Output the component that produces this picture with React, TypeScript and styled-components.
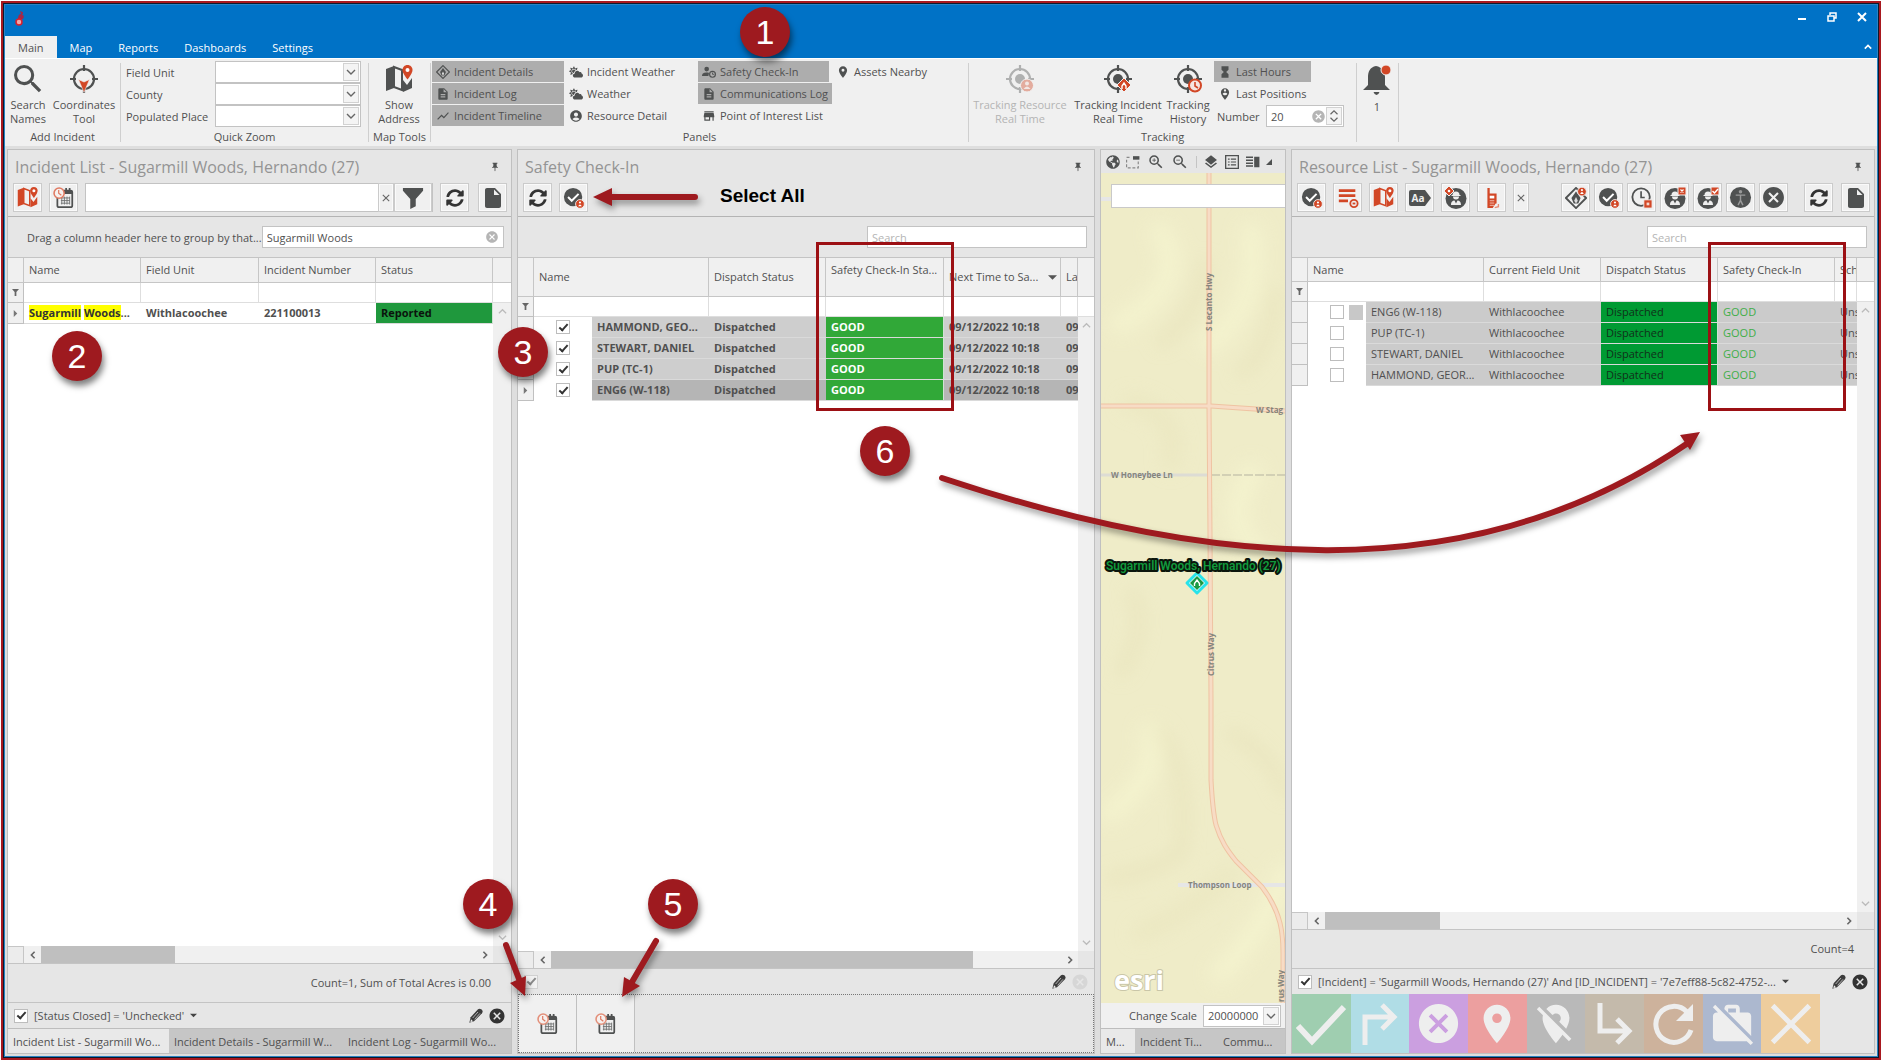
import React from "react";
import styled, { createGlobalStyle, css } from "styled-components";
import {
  MdSearch, MdDescription, MdShowChart, MdStore, MdPersonPinCircle, MdZoomIn, MdZoomOut,
  MdLayers, MdHourglassFull, MdCancel, MdInsertDriveFile, MdLocationOn,
  MdLocationOff, MdWorkOff, MdPushPin, MdAccountCircle,
} from "react-icons/md";
import { FaSyncAlt, FaCloudSun, FaGlobeAmericas } from "react-icons/fa";

const ink = "#4f5151";
const red = "#d24726";
const mark = "#9e1a1f";

const Global = createGlobalStyle`
  *, *::before, *::after { box-sizing: border-box; }
  body { margin: 0; background: #fff; }
  body, button, input, select { font-family: "Open Sans", "Noto Sans", sans-serif; font-size: 11px; color: #505050; }
  button { padding: 0; border: 0; background: none; }
  svg { display: block; flex: none; }
`;

/* ---------- window frame ---------- */
const Page = styled.div`
  position: relative;
  height: 100vh;
  padding: 1px;
  display: flex;
  overflow: hidden;
`;
const Frame = styled.div`
  flex: 1;
  min-width: 0;
  display: flex;
  border: 2px solid #a8181f;
`;
const InnerFrame = styled.div`
  flex: 1;
  min-width: 0;
  display: flex;
  flex-direction: column;
  border: 1px solid #0a1a2e;
  outline: 1px solid #2a83c4;
  outline-offset: -2px;
  padding: 1px;
  background: #dedede;
`;
const TitleBar = styled.header`
  height: 31px;
  background: #0072c6;
  display: flex;
  justify-content: space-between;
  align-items: flex-start;
  padding: 5px 8px 0 8px;
`;
const WindowButtons = styled.div`
  display: flex;
  gap: 16px;
  button { width: 14px; height: 14px; display: grid; place-items: center; }
`;
const MenuRow = styled.nav`
  height: 22px;
  background: #0072c6;
  display: flex;
  align-items: stretch;
  button:last-child { margin-left: auto; padding: 0 5px; }
`;
const MenuTab = styled.button<{ $active?: boolean }>`
  padding: 0 13px;
  color: ${(p) => (p.$active ? "#505050" : "#fff")};
  background: ${(p) => (p.$active ? "#f0f0f0" : "transparent")};
`;

/* ---------- ribbon ---------- */
const Ribbon = styled.section`
  height: 88px;
  background: #f0f0f0;
  border-top: 1px solid #fff;
  padding-top: 2px;
  display: flex;
`;
const Divider = styled.div`
  width: 1px;
  margin: 2px 0 4px;
  background: #cfcfcf;
`;
const MapDivider = styled.div`
  width: 1px;
  height: 12px;
  background: #c4c4c4;
`;
const Group = styled.div<{ $w: number }>`
  width: ${(p) => p.$w}px;
  display: flex;
  flex-direction: column;
`;
const GroupBody = styled.div<{ $pad?: number }>`
  height: 67px;
  display: flex;
  padding-left: ${(p) => p.$pad ?? 0}px;
`;
const GroupLabel = styled.div`
  text-align: center;
  line-height: 18px;
`;
const BigButton = styled.button<{ $w: number }>`
  width: ${(p) => p.$w}px;
  display: flex;
  flex-direction: column;
  align-items: center;
  gap: 5px;
  padding-top: 4px;
  line-height: 14px;
  white-space: pre;
  text-align: center;
  &:disabled { color: #b4b4b4; }
  &:disabled svg { opacity: 0.4; }
`;
const ZoomForm = styled.div`
  display: grid;
  grid-template-columns: 89px 146px;
  grid-auto-rows: 22px;
  align-items: center;
`;
const Box = styled.div<{ $w?: number; $h?: number }>`
  ${(p) => (p.$w ? css`width: ${p.$w}px;` : css`flex: 1; min-width: 0;`)}
  height: ${(p) => p.$h ?? 22}px;
  background: #fff;
  border: 1px solid #c3c3c3;
  display: flex;
  align-items: center;
`;
const Arrow = styled.span`
  width: 16px;
  height: 18px;
  margin-right: 1px;
  background: #f4f4f4;
  border: 1px solid #d2d2d2;
  display: grid;
  place-items: center;
  pointer-events: none;
`;
const Select = styled.select`
  flex: 1;
  min-width: 0;
  height: 100%;
  border: 0;
  background: none;
  appearance: none;
  padding: 0 4px;
  outline: 0;
`;
const Field = styled.input`
  flex: 1;
  min-width: 0;
  height: 100%;
  border: 0;
  background: none;
  padding: 0 4px;
  outline: 0;
  &::placeholder { color: #b5b5b5; opacity: 1; }
`;
const ClearMark = styled.span`
  padding-right: 4px;
`;
const ToggleGrid = styled.div`
  display: grid;
  grid-template-columns: 133px 133px 134px auto;
  grid-template-rows: repeat(3, 21px);
  grid-auto-flow: column;
  gap: 1px 0;
`;
const Toggle = styled.button<{ $on?: boolean; $w?: number }>`
  width: ${(p) => (p.$w ? p.$w + "px" : "auto")};
  height: 21px;
  display: flex;
  align-items: center;
  gap: 4px;
  padding: 0 4px;
  white-space: nowrap;
  background: ${(p) => (p.$on ? "#adadad" : "transparent")};
`;
const TrackOptions = styled.div`
  margin-left: 5px;
  display: flex;
  flex-direction: column;
  gap: 1px;
`;
const NumberRow = styled.div`
  display: flex;
  align-items: center;
  justify-content: space-between;
  width: 130px;
  padding-left: 3px;
`;

/* ---------- docked panels ---------- */
const Dock = styled.main`
  flex: 1;
  min-height: 0;
  padding: 3px 2px 2px;
  display: grid;
  grid-template-columns: minmax(0, 505fr) minmax(0, 578fr) minmax(0, 186fr) minmax(0, 584fr);
  gap: 5px;
`;
const Panel = styled.section`
  min-height: 0;
  display: flex;
  flex-direction: column;
  background: #e6e6e6;
  border: 1px solid #c0c0c0;
`;
const PanelTitle = styled.h2`
  margin: 0;
  height: 33px;
  padding: 0 11px 0 7px;
  display: flex;
  align-items: center;
  justify-content: space-between;
  font-size: 16px;
  font-weight: 400;
  color: #949494;
  white-space: nowrap;
`;
const Toolbar = styled.div<{ $gap?: number }>`
  height: 34px;
  padding: 0 4px 4px 5px;
  display: flex;
  gap: ${(p) => p.$gap ?? 7}px;
  border-bottom: 1px solid #b4b4b4;
`;
const ToolSet = styled.div<{ $gap: number; $push?: boolean }>`
  display: flex;
  gap: ${(p) => p.$gap}px;
  margin-left: ${(p) => (p.$push ? "auto" : 0)};
`;
const Tool = styled.button<{ $w?: number }>`
  width: ${(p) => p.$w ?? 29}px;
  height: 29px;
  flex: none;
  display: grid;
  place-items: center;
  background: #f0f0f0;
  border: 1px solid #cbcbcb;
  box-shadow: inset 0 0 0 1px #fafafa;
`;
const GroupBar = styled.div`
  height: 41px;
  padding: 0 7px 0 19px;
  display: flex;
  align-items: center;
  justify-content: space-between;
  border-bottom: 1px solid #c4c4c4;
`;
const Small = styled.span`
  font-size: 11px;
  white-space: nowrap;
`;
const GridArea = styled.div`
  flex: 1;
  min-height: 0;
  display: flex;
  background: #fff;
`;
const TableSide = styled.div`
  flex: 1;
  min-width: 0;
  overflow: hidden;
`;
const Table = styled.table`
  width: 100%;
  table-layout: fixed;
  border-collapse: separate;
  border-spacing: 0;
  th, td {
    padding: 0 3px 0 5px;
    overflow: hidden;
    white-space: nowrap;
    text-align: left;
    line-height: 16px;
  }
`;
const Head = styled.tr<{ $h: number }>`
  height: ${(p) => p.$h}px;
  th {
    font-weight: 400;
    background: #f0f0f0;
    border-right: 1px solid #c6c6c6;
    border-bottom: 1px solid #c6c6c6;
  }
  th.top { vertical-align: top; padding-top: 4px; }
`;
const Sorted = styled.span`
  display: flex;
  align-items: center;
  justify-content: space-between;
`;
const FilterRow = styled.tr`
  height: 20px;
  td { border-right: 1px solid #dedede; border-bottom: 1px solid #dedede; }
`;
const Row = styled.tr<{ $bold?: boolean; $bg?: string }>`
  height: 21px;
  font-weight: ${(p) => (p.$bold ? 700 : 400)};
  td {
    border-bottom: 1px solid #dadada;
    background: ${(p) => p.$bg ?? "#fff"};
  }
  td.check { background: #fff; border-color: #fff; }
`;
const Indicator = styled.td`
  &&& {
    background: #f0f0f0;
    border-right: 1px solid #c0c0c0;
    border-bottom: 1px solid #c0c0c0;
    padding: 0 4px;
  }
`;
const Status = styled.td<{ $fill?: string; $ink: string }>`
  &&& {
    ${(p) => p.$fill && css`background: ${p.$fill}; border-right: 1px solid #cfe3d2;`}
    color: ${(p) => p.$ink};
  }
`;
const Hit = styled.mark`
  background: #ff0;
  color: #333;
`;
const CheckCell = styled.div`
  display: flex;
  gap: 5px;
  padding-left: 17px;
`;
const Swatch = styled.i`
  width: 15px;
  height: 15px;
  background: #c8c8c8;
`;
const Check = styled.input.attrs({ type: "checkbox" })<{ $faint?: boolean }>`
  appearance: none;
  flex: none;
  width: 14px;
  height: 14px;
  margin: 0;
  background: #fff;
  border: 1px solid #bdbdbd;
  display: grid;
  place-items: center;
  opacity: ${(p) => (p.$faint ? 0.5 : 1)};
  &:checked::after {
    content: "";
    width: 5px;
    height: 9px;
    margin-top: -2px;
    border: solid #333;
    border-width: 0 2px 2px 0;
    transform: rotate(42deg);
  }
`;
const RailSide = styled.div<{ $w: number }>`
  width: ${(p) => p.$w}px;
  display: flex;
  flex-direction: column;
`;
const RailHead = styled.div<{ $h: number }>`
  height: ${(p) => p.$h}px;
  background: #f0f0f0;
  border-bottom: 1px solid #c6c6c6;
`;
const RailFilter = styled.div`
  height: 20px;
  border-bottom: 1px solid #dedede;
`;
const Rail = styled.div`
  flex: 1;
  background: #f0f0f0;
  display: flex;
  flex-direction: column;
  justify-content: space-between;
  align-items: center;
  padding: 4px 0;
`;
const HBar = styled.div`
  height: 17px;
  display: flex;
  background: #f0f0f0;
`;
const HCorner = styled.div`
  width: 16px;
  background: #ececec;
  border: solid #c6c6c6;
  border-width: 1px 1px 0 0;
`;
const HArrow = styled.div`
  width: 17px;
  display: grid;
  place-items: center;
`;
const HTrack = styled.div`
  flex: 1;
`;
const HThumb = styled.div<{ $w: number }>`
  width: ${(p) => p.$w}px;
  height: 17px;
  background: #bfbfbf;
`;
const HEnd = styled.div<{ $w: number }>`
  width: ${(p) => p.$w}px;
  background: #e6e6e6;
`;
const Summary = styled.div`
  height: 39px;
  padding: 0 20px 2px 0;
  border-top: 1px solid #c4c4c4;
  display: flex;
  align-items: center;
  justify-content: flex-end;
`;
const FilterBar = styled.div`
  height: 26px;
  padding: 0 5px 0 6px;
  border-top: 1px solid #c4c4c4;
  display: flex;
  align-items: center;
  gap: 4px;
  label { display: flex; align-items: center; gap: 6px; white-space: nowrap; }
  & > button:first-of-type { margin-left: auto; }
`;
const Tabs = styled.div`
  height: 25px;
  display: flex;
  background: #c6c6c6;
  border-top: 1px solid #bdbdbd;
`;
const Tab = styled.button<{ $active?: boolean; $w: number }>`
  width: ${(p) => p.$w}px;
  padding-left: 5px;
  text-align: left;
  white-space: nowrap;
  background: ${(p) => (p.$active ? "#e9e9e9" : "transparent")};
`;
const ActionStrip = styled.div`
  height: 59px;
  display: flex;
  border: 1px dotted #777;
`;
const ActionTile = styled.button`
  width: 58px;
  display: grid;
  place-items: center;
  background: #f0f0f0;
  border-right: 1px solid #c0c0c0;
`;
const TileStrip = styled.div`
  height: 59px;
  width: 528px;
  max-width: 100%;
  display: grid;
  grid-template-columns: repeat(9, 1fr);
`;
const Tile = styled.button<{ $bg: string }>`
  background: ${(p) => p.$bg};
  display: grid;
  place-items: center;
  color: #eee;
`;

/* ---------- map ---------- */
const MapTools = styled.div`
  height: 23px;
  display: flex;
  align-items: center;
  justify-content: space-between;
  padding: 0 13px 0 5px;
`;
const MapView = styled.div`
  flex: 1;
  min-height: 0;
  position: relative;
  overflow: hidden;
  & > svg { width: 100%; height: 100%; }
`;
const MapSearch = styled.input`
  position: absolute;
  top: 11px;
  left: 10px;
  right: 0;
  width: calc(100% - 10px);
  height: 24px;
  background: #fff;
  border: 1px solid #c9c9c9;
  border-right: 0;
`;
const ScaleRow = styled.div`
  height: 25px;
  padding: 0 4px;
  background: #f0f0f0;
  display: flex;
  align-items: center;
  justify-content: flex-end;
  gap: 6px;
`;

/* ---------- callouts over the window ---------- */
const Callouts = styled.div`
  position: absolute;
  inset: 0;
  pointer-events: none;
`;
const Lines = styled.svg`
  position: absolute;
  inset: 0;
  overflow: visible;
  filter: drop-shadow(2px 4px 3px rgba(0, 0, 0, 0.4));
`;
const Badge = styled.div<{ $x: number; $y: number }>`
  position: absolute;
  left: ${(p) => p.$x - 25}px;
  top: ${(p) => p.$y - 25}px;
  width: 50px;
  height: 50px;
  border-radius: 50%;
  background: ${mark};
  color: #fff;
  font: 34px/50px "Liberation Sans", Arial, sans-serif;
  text-align: center;
  box-shadow: 2px 5px 6px rgba(0, 0, 0, 0.5);
`;
const Outline = styled.div<{ $x: number }>`
  position: absolute;
  left: ${(p) => p.$x}px;
  top: 242px;
  width: 138px;
  height: 169px;
  border: 3px solid #9c1014;
`;
const Note = styled.div`
  position: absolute;
  left: 720px;
  top: 184px;
  font: bold 19px/24px "Liberation Sans", Arial, sans-serif;
  color: #000;
`;

/* ---------- icons ---------- */
const Svg = ({ s = 20, v = 24, children }: { s?: number; v?: number; children: React.ReactNode }) => (
  <svg width={s} height={s} viewBox={`0 0 ${v} ${v}`} fill="none" aria-hidden="true">{children}</svg>
);
const Chevron = ({ dir = "down", c = "#666", s = 10, w = 1.4 }: { dir?: string; c?: string; s?: number; w?: number }) => {
  const d: Record<string, string> = { down: "M1 3l4 4 4-4", up: "M1 7l4-4 4 4", left: "M7 1L3 5l4 4", right: "M3 1l4 4-4 4" };
  return <Svg s={s} v={10}><path d={d[dir]} stroke={c} strokeWidth={w} /></Svg>;
};
const MapIcon = ({ s = 28, c = ink }: { s?: number; c?: string }) => (
  <Svg s={s} v={28}>
    <path d="M1 4l8-3v22l-8 3z" fill={c} />
    <path d="M9 2l8 3v20l-8-3z" stroke={c} strokeWidth="2" />
    <path d="M18 15l4 5 5-7v10l-9 4z" fill={c} />
    <path d="M22.500 0c-3 0-5 2.200-5 5 0 3.500 5 9.500 5 9.500s5-6 5-9.500c0-2.800-2-5-5-5z" fill={red} />
    <circle cx="22.500" cy="5" r="2" fill="#fff" />
  </Svg>
);
const CalendarIcon = ({ s = 21, faded = false }: { s?: number; faded?: boolean }) => (
  <Svg s={s}>
    <path d="M5 8v13a2 2 0 002 2h13a2 2 0 002-2V6a2 2 0 00-2-2h-8" stroke={ink} strokeWidth="2" />
    <path d="M12 3.500h10V8H12z" fill={ink} />
    <path d="M15 1v4M19 1v4" stroke={ink} strokeWidth="2" />
    <path d="M9 12.500h10M9 15.500h10M9 18.500h10M10 11v9M13 11v9M16 11v9M19 11v9" stroke="#6d6f6f" strokeWidth="1" />
    <circle cx="7" cy="7" r="5.800" fill="#f6f0ee" stroke={faded ? "#e3907a" : "#e07a62"} strokeWidth="1.800" />
    <path d="M6.500 3.500V7l3 2.500" stroke="#e07a62" strokeWidth="1.400" />
  </Svg>
);
const InfoBadge = ({ x = 18.5, y = 18.5 }: { x?: number; y?: number }) => (
  <>
    <circle cx={x} cy={y} r="4.800" fill={red} stroke="#f0f0f0" />
    <circle cx={x} cy={y - 1.6} r="1.200" fill="#fff" />
    <path d={`M${x - 2} ${y + 2.5}q2-4 4 0z`} fill="#fff" />
  </>
);
const CheckBadge = ({ s = 22 }: { s?: number }) => (
  <Svg s={s}>
    <circle cx="11" cy="11" r="10" fill={ink} />
    <path d="M5.500 11l4 4 7.500-7.500" stroke="#fff" strokeWidth="2.200" />
    <InfoBadge />
  </Svg>
);
const ListBadge = () => (
  <Svg s={22}>
    <path d="M2 4h18M2 9.500h18M2 15h10" stroke={red} strokeWidth="3" />
    <circle cx="18.500" cy="18" r="4" stroke={red} strokeWidth="2" fill="#f0f0f0" />
    <path d="M17 17h3v2h-3z" fill={red} />
  </Svg>
);
const TagIcon = () => (
  <Svg s={24}>
    <path d="M3 4h14l6 8-6 8H3a2 2 0 01-2-2V6a2 2 0 012-2z" fill={ink} />
    <text x="3.500" y="16" fontSize="10" fontWeight="700" fill="#eee" fontFamily="Open Sans, sans-serif">Aa</text>
  </Svg>
);
const PersonDisc = ({ badge }: { badge?: "x" | "check" | "fire" }) => (
  <Svg s={24}>
    <circle cx="12" cy="12.500" r="10.500" fill={ink} />
    <path d="M8.500 9a3.500 3.500 0 017 0h1v1h-9V9zM9 10.500h6a3 3 0 01-6 0zM7 19c0-3.500 2-4.500 3.500-4.500l1.500 3 1.500-3c1.500 0 3.500 1 3.500 4.500z" fill="#eee" />
    {badge === "fire" && <><path d="M5 0l5 5-5 5-5-5z" fill={red} stroke="#f0f0f0" /><circle cx="5" cy="5" r="1.300" fill="#fff" /></>}
    {badge && badge !== "fire" && <path d="M15 1h8v8h-8z" fill={red} stroke="#f0f0f0" />}
    {badge === "x" && <path d="M17.500 3.500l3 3M20.500 3.500l-3 3" stroke="#fff" strokeWidth="1.200" />}
    {badge === "check" && <path d="M16.500 5l2 2 3.500-4" stroke="#fff" strokeWidth="1.400" />}
  </Svg>
);
const RadioIcon = () => (
  <Svg s={22}>
    <path d="M7 1h2.500v6H17v16H7z" fill={red} />
    <path d="M9.500 9.500h5v3h-5z" fill="#fff" />
    <path d="M9.500 15h5M9.500 17.500h5M9.500 20h5" stroke="#f3c4b8" strokeWidth="1" />
    <path d="M12 24h9v-6h-5" fill="#f0f0f0" />
    <path d="M15 22.500l4-1v-3" stroke="#e78a74" strokeWidth="1.500" />
  </Svg>
);
const FireDiamond = ({ s = 22, c = ink, badge = false }: { s?: number; c?: string; badge?: boolean }) => (
  <Svg s={s}>
    <path d="M12 1l11 11-11 11L1 12z" stroke={c} strokeWidth="2" />
    <path d="M12 5l5 7-2.500 6h-5L7 12z" fill={c} />
    <path d="M12 11l2 4-2 3-2-3z" fill="#ddd" />
    {badge && <InfoBadge x={18.5} y={5} />}
  </Svg>
);
const ClockBadge = () => (
  <Svg s={22}>
    <circle cx="11" cy="11" r="9.500" stroke={ink} strokeWidth="2" />
    <path d="M11 4.500v7h4" stroke={ink} strokeWidth="1.800" />
    <path d="M14 14h9v9h-9z" fill={red} stroke="#f0f0f0" />
    <path d="M17 17h3v3h-3z" fill="#f6d6cd" />
  </Svg>
);
const FigureDisc = () => (
  <Svg s={23}>
    <circle cx="12" cy="12" r="11" fill={ink} />
    <circle cx="12" cy="6" r="1.800" fill="#999" />
    <path d="M7 9.500h10M12 9v6l-2.500 5M12 15l2.500 5" stroke="#999" strokeWidth="1.500" />
  </Svg>
);
const Target = ({ kind }: { kind: "person" | "fire" | "history" | "nav" }) => (
  <Svg s={28} v={28}>
    <circle cx="14" cy="14" r="10" stroke={ink} strokeWidth="2.200" />
    <path d="M14 0v6M14 22v6M0 14h6M22 14h6" stroke={ink} strokeWidth="2.200" />
    {kind !== "nav" && <circle cx="14" cy="14" r="5" fill={ink} />}
    {kind === "nav" && <path d="M8.500 14.500L14 17l5.500-2.500L14 27.500z" fill={red} stroke="#f0f0f0" strokeWidth="0.600" />}
    {kind === "person" && <><circle cx="21" cy="20.500" r="6.500" fill={red} stroke="#f0f0f0" /><circle cx="21" cy="18.500" r="2" fill="#f7dcd4" /><path d="M17.500 24q3.500-5 7 0z" fill="#f7dcd4" /></>}
    {kind === "fire" && <><path d="M20 13l7 7-7 7-7-7z" fill={red} stroke="#f0f0f0" /><path d="M18 24v-3l2-3 2 3v3" stroke="#fff" strokeWidth="1.400" /></>}
    {kind === "history" && <><circle cx="21" cy="20.500" r="6" fill="#f6e6e1" stroke={red} strokeWidth="2" /><path d="M21 17v4l3 2" stroke={red} strokeWidth="1.600" /></>}
  </Svg>
);
const Bell = () => (
  <Svg s={30} v={30}>
    <path d="M14 1c-6 1-8 6-8 11v8l-5 5h27l-5-5v-8c0-5-3-10-9-11z" fill={ink} />
    <path d="M11.500 27h6q-1 3-3 3t-3-3z" fill={ink} />
    <circle cx="24" cy="5" r="5" fill={red} stroke="#f0f0f0" />
  </Svg>
);
const PersonClock = () => (
  <Svg s={14}>
    <circle cx="8" cy="7" r="4" fill={ink} />
    <path d="M0 19c0-5 4-6 8-6 2 0 3 0 4 1l-1 5z" fill={ink} />
    <circle cx="18" cy="16" r="5" stroke={ink} strokeWidth="2" />
    <path d="M18 13v3h3" stroke={ink} strokeWidth="1.500" />
  </Svg>
);
const Funnel = ({ s = 22 }: { s?: number }) => (
  <Svg s={s}><path d="M1 1h22v3l-8 9v8l-6 3V13L1 4z" fill={ink} /></Svg>
);
const TinyFunnel = () => <Svg s={7} v={8}><path d="M0 0h8L5 3.500V8H3V3.500z" fill="#666" /></Svg>;
const RowMark = () => <Svg s={7} v={8}><path d="M2 0l4 4-4 4z" fill="#777" /></Svg>;
const Pin = () => <MdPushPin size={10} color={ink} />;
const CrossIcon = ({ s = 10, w = 1.4, c = "#666" }: { s?: number; w?: number; c?: string }) => (
  <Svg s={s} v={10}><path d="M1 1l8 8M9 1L1 9" stroke={c} strokeWidth={w} /></Svg>
);
const Pencil = () => (
  <Svg s={16}>
    <path d="M2 22l2-8L15 2q2-2 5 0l1 1q2 2 0 5L9 20z" fill="#3c3c3c" />
    <path d="M7 15l8-9M10 17l8-9" stroke="#bbb" strokeWidth="1.400" />
    <path d="M4.500 17l3 3-4 1.200z" fill="#eee" />
  </Svg>
);

/* ---------- pieces ---------- */
const Combo = ({ id, value = "", w, h }: { id: string; value?: string; w?: number; h?: number }) => (
  <Box $w={w} $h={h}>
    <Select id={id} defaultValue={value}><option>{value}</option></Select>
    <Arrow><Chevron /></Arrow>
  </Box>
);

const HScroll = ({ thumb, end }: { thumb: number; end: number }) => (
  <HBar>
    <HCorner />
    <HArrow><Chevron dir="left" w={2} s={8} /></HArrow>
    <HTrack><HThumb $w={thumb} /></HTrack>
    <HArrow><Chevron dir="right" w={2} s={8} /></HArrow>
    <HEnd $w={end} />
  </HBar>
);

const ScrollRail = ({ w, h }: { w: number; h: number }) => (
  <RailSide $w={w}>
    <RailHead $h={h} />
    <RailFilter />
    <Rail><Chevron dir="up" c="#bbb" s={9} /><Chevron dir="down" c="#bbb" s={9} /></Rail>
  </RailSide>
);

const Cols = ({ widths }: { widths: number[] }) => (
  <colgroup>{widths.map((w, i) => <col key={i} width={w} />)}<col /></colgroup>
);

const BlankFilter = ({ spans }: { spans: number[] }) => (
  <FilterRow>
    <Indicator><TinyFunnel /></Indicator>
    {spans.map((n, i) => <td key={i} colSpan={n} />)}
  </FilterRow>
);

const BarFilter = ({ text, off }: { text?: string; off?: boolean }) => (
  <FilterBar>
    <label>
      <Check defaultChecked $faint={off} aria-label={text ? undefined : "Filter"} />
      {text}
      {text && <Svg s={7} v={8}><path d="M0 2h8L4 6z" fill="#444" /></Svg>}
    </label>
    <button aria-label="Edit filter"><Pencil /></button>
    <button aria-label="Clear filter"><MdCancel size={18} color={off ? "#d6d6d6" : "#333"} /></button>
  </FilterBar>
);

const checkIns = ["HAMMOND, GEO...", "STEWART, DANIEL", "PUP (TC-1)", "ENG6 (W-118)"];
const resources = ["ENG6 (W-118)", "PUP (TC-1)", "STEWART, DANIEL", "HAMMOND, GEOR..."];

const RibbonBar = () => (
  <Ribbon>
    <Group $w={115}>
      <GroupBody>
        <BigButton $w={46}><MdSearch size={28} color={ink} viewBox="3 3 18 18" />{"Search\nNames"}</BigButton>
        <BigButton $w={66}><Target kind="nav" />{"Coordinates\nTool"}</BigButton>
      </GroupBody>
      <GroupLabel>Add Incident</GroupLabel>
    </Group>
    <Divider />
    <Group $w={247}>
      <GroupBody $pad={5}>
        <ZoomForm>
          <label htmlFor="unit">Field Unit</label><Combo id="unit" w={146} />
          <label htmlFor="county">County</label><Combo id="county" w={146} />
          <label htmlFor="place">Populated Place</label><Combo id="place" w={146} />
        </ZoomForm>
      </GroupBody>
      <GroupLabel>Quick Zoom</GroupLabel>
    </Group>
    <Divider />
    <Group $w={61}>
      <GroupBody><BigButton $w={60}><MapIcon />{"Show\nAddress"}</BigButton></GroupBody>
      <GroupLabel>Map Tools</GroupLabel>
    </Group>
    <Divider />
    <Group $w={537}>
      <GroupBody $pad={1}>
        <ToggleGrid>
          <Toggle $on $w={132}><FireDiamond s={14} />Incident Details</Toggle>
          <Toggle $on $w={132}><MdDescription size={14} color={ink} />Incident Log</Toggle>
          <Toggle $on $w={132}><MdShowChart size={14} color={ink} />Incident Timeline</Toggle>
          <Toggle><FaCloudSun size={14} color={ink} />Incident Weather</Toggle>
          <Toggle><FaCloudSun size={14} color={ink} />Weather</Toggle>
          <Toggle><MdAccountCircle size={14} color={ink} />Resource Detail</Toggle>
          <Toggle $on $w={131}><PersonClock />Safety Check-In</Toggle>
          <Toggle $on $w={134}><MdDescription size={14} color={ink} />Communications Log</Toggle>
          <Toggle><MdStore size={14} color={ink} />Point of Interest List</Toggle>
          <Toggle><MdLocationOn size={14} color={ink} />Assets Nearby</Toggle>
        </ToggleGrid>
      </GroupBody>
      <GroupLabel>Panels</GroupLabel>
    </Group>
    <Divider />
    <Group $w={387}>
      <GroupBody $pad={2}>
        <BigButton $w={98} disabled><Target kind="person" />{"Tracking Resource\nReal Time"}</BigButton>
        <BigButton $w={98}><Target kind="fire" />{"Tracking Incident\nReal Time"}</BigButton>
        <BigButton $w={42}><Target kind="history" />{"Tracking\nHistory"}</BigButton>
        <TrackOptions>
          <Toggle $on $w={97}><MdHourglassFull size={14} color={ink} />Last Hours</Toggle>
          <Toggle><MdPersonPinCircle size={14} color={ink} />Last Positions</Toggle>
          <NumberRow>
            <label htmlFor="hours">Number</label>
            <Box $w={78}>
              <Field id="hours" defaultValue="20" />
              <MdCancel size={15} color="#b5b5b5" />
              <Arrow><Svg s={14} v={16}><path d="M4 6l4-4 4 4M4 10l4 4 4-4" stroke="#666" strokeWidth="1.400" /></Svg></Arrow>
            </Box>
          </NumberRow>
        </TrackOptions>
      </GroupBody>
      <GroupLabel>Tracking</GroupLabel>
    </Group>
    <Divider />
    <Group $w={41}>
      <GroupBody><BigButton $w={40}><Bell />1</BigButton></GroupBody>
    </Group>
    <Divider />
  </Ribbon>
);

const IncidentList = () => (
  <Panel>
    <PanelTitle>Incident List - Sugarmill Woods, Hernando (27)<Pin /></PanelTitle>
    <Toolbar>
      <Tool aria-label="Map"><MapIcon s={21} c={red} /></Tool>
      <Tool aria-label="Schedule"><CalendarIcon /></Tool>
      <Box $h={29}>
        <Field aria-label="Filter incidents" />
        <Tool $w={16} aria-label="Clear"><CrossIcon s={8} /></Tool>
        <Tool $w={38} aria-label="Filter"><Funnel /></Tool>
      </Box>
      <ToolSet $gap={9}>
        <Tool aria-label="Refresh"><FaSyncAlt size={18} color="#333" /></Tool>
        <Tool aria-label="New"><MdInsertDriveFile size={24} color={ink} /></Tool>
      </ToolSet>
    </Toolbar>
    <GroupBar>
      <Small>Drag a column header here to group by that...</Small>
      <Box $w={244}>
        <Field defaultValue="Sugarmill Woods" aria-label="Search incidents" />
        <ClearMark><MdCancel size={14} color="#b5b5b5" /></ClearMark>
      </Box>
    </GroupBar>
    <GridArea>
      <TableSide>
        <Table>
          <Cols widths={[16, 117, 118, 117]} />
          <thead>
            <Head $h={25}><th /><th>Name</th><th>Field Unit</th><th>Incident Number</th><th>Status</th></Head>
          </thead>
          <tbody>
            <BlankFilter spans={[1, 1, 1, 1]} />
            <Row $bold>
              <Indicator><RowMark /></Indicator>
              <td><Hit>Sugarmill</Hit> <Hit>Woods</Hit>...</td>
              <td>Withlacoochee</td>
              <td>221100013</td>
              <Status $fill="#1f983d" $ink="#0a140c">Reported</Status>
            </Row>
          </tbody>
        </Table>
      </TableSide>
      <ScrollRail w={18} h={25} />
    </GridArea>
    <HScroll thumb={134} end={18} />
    <Summary>Count=1, Sum of Total Acres is 0.00</Summary>
    <BarFilter text="[Status Closed] = 'Unchecked'" />
    <Tabs>
      <Tab $w={161} $active>Incident List - Sugarmill Wo...</Tab>
      <Tab $w={174}>Incident Details - Sugarmill W...</Tab>
      <Tab $w={164}>Incident Log - Sugarmill Wo...</Tab>
    </Tabs>
  </Panel>
);

const SafetyCheckIn = () => (
  <Panel>
    <PanelTitle>Safety Check-In<Pin /></PanelTitle>
    <Toolbar>
      <Tool aria-label="Refresh"><FaSyncAlt size={18} color="#333" /></Tool>
      <Tool aria-label="Select all"><CheckBadge /></Tool>
    </Toolbar>
    <GroupBar>
      <span />
      <Box $w={220}><Field placeholder="Search" aria-label="Search check-ins" /></Box>
    </GroupBar>
    <GridArea>
      <TableSide>
        <Table>
          <Cols widths={[16, 58, 117, 117, 118, 117]} />
          <thead>
            <Head $h={39}>
              <th /><th colSpan={2}>Name</th><th>Dispatch Status</th><th className="top">Safety Check-In Sta...</th>
              <th><Sorted>Next Time to Sa...<Svg s={9} v={8}><path d="M0 2h8L4 6z" fill="#555" /></Svg></Sorted></th>
              <th>La</th>
            </Head>
          </thead>
          <tbody>
            <BlankFilter spans={[2, 1, 1, 1, 1]} />
            {checkIns.map((name, i) => (
              <Row key={name} $bold $bg={i === 3 ? "#b5b5b5" : "#cecece"}>
                <Indicator>{i === 3 && <RowMark />}</Indicator>
                <td className="check"><CheckCell><Check defaultChecked aria-label={name} /></CheckCell></td>
                <td>{name}</td>
                <td>Dispatched</td>
                <Status $fill="#31a838" $ink="#fff">GOOD</Status>
                <td>09/12/2022 10:18</td>
                <td>09</td>
              </Row>
            ))}
          </tbody>
        </Table>
      </TableSide>
      <ScrollRail w={16} h={39} />
    </GridArea>
    <HScroll thumb={422} end={16} />
    <BarFilter off />
    <ActionStrip>
      <ActionTile aria-label="Check in"><CalendarIcon faded /></ActionTile>
      <ActionTile aria-label="Check in later"><CalendarIcon faded /></ActionTile>
    </ActionStrip>
  </Panel>
);

const road = "M108 0V233L109 360 110 527V607C111 625 112 640 115 652 120 668 126 677 135 688L161 714C171 727 176 738 179 750 182 762 182 770 182 780V831";
const MapPanel = () => (
  <Panel>
    <MapTools>
      <FaGlobeAmericas size={14} color={ink} />
      <Svg s={14}><path d="M1 8v14h20V8M1 4h8" stroke="#888" strokeWidth="2" strokeDasharray="5 3" /><path d="M12 2h11v6H12z" fill={ink} /></Svg>
      <MdZoomIn size={18} color={ink} />
      <MdZoomOut size={18} color={ink} />
      <MapDivider />
      <MdLayers size={16} color={ink} />
      <Svg s={14}><path d="M1 1h22v22H1z" stroke={ink} strokeWidth="2.500" /><path d="M5 7h3M5 12h3M5 17h3M10 7h9M10 12h9M10 17h9" stroke={ink} strokeWidth="2" /></Svg>
      <Svg s={14}><path d="M0 4h12M0 9h12M0 14h12M0 19h12" stroke={ink} strokeWidth="2.500" /><path d="M14 3h9v18h-9z" fill={ink} /></Svg>
      <Svg s={6} v={8}><path d="M8 0v8H0z" fill={ink} /></Svg>
    </MapTools>
    <MapView>
      <svg viewBox="0 0 184 831" preserveAspectRatio="xMinYMin slice" fontFamily="Open Sans, Noto Sans, sans-serif">
        <defs><filter id="soft" x="-50%" y="-50%" width="200%" height="200%"><feGaussianBlur stdDeviation="9" /></filter></defs>
        <rect width="184" height="831" fill="#efecc8" />
        <g filter="url(#soft)" fill="none" strokeLinecap="round" opacity="0.6">
          <path d="M20 150Q90 110 60 60M150 60Q160 130 110 170M10 640Q60 600 50 560M150 300Q120 350 160 380M120 800Q160 760 184 700" stroke="#f7f7d2" strokeWidth="22" />
          <path d="M60 170Q100 140 104 90M30 420Q50 450 20 500M60 560Q90 600 80 680Q50 700 10 705M140 200Q170 180 175 120M130 560Q170 580 184 620" stroke="#e4dfb6" strokeWidth="10" />
          <path d="M30 230Q80 240 70 290M40 760Q90 740 130 700" stroke="#e9e5be" strokeWidth="18" />
        </g>
        <path d="M0 26h10M77 712h107" stroke="#e6e6e6" strokeWidth="4" />
        <path d="M0 302h108" stroke="#dddcd4" strokeWidth="3" />
        <path d="M110 302h74" stroke="#b5b3a0" strokeWidth="1" strokeDasharray="9 2" />
        <path d="M0 233h110l74 5" stroke="#efc3a2" strokeWidth="5" fill="none" />
        <path d={road} stroke="#efc3a2" strokeWidth="5" fill="none" />
        <path d="M0 233h110l74 5" stroke="#f7dcc5" strokeWidth="3" fill="none" />
        <path d={road} stroke="#f7dcc5" strokeWidth="3" fill="none" />
        <g fill="#85857c" fontSize="8" fontWeight="700">
          <text x="155" y="240">W Stag</text>
          <text x="10" y="305">W Honeybee Ln</text>
          <text x="87" y="715">Thompson Loop</text>
          <text transform="translate(111 158) rotate(-90)">S Lecanto Hwy</text>
          <text transform="translate(113 503) rotate(-90)">Citrus Way</text>
          <text transform="translate(183 829) rotate(-90)">rus Way</text>
        </g>
        <path d="M96 400l10 10-10 10-10-10z" fill="#fff" stroke="#27e3ea" strokeWidth="3" strokeLinejoin="round" />
        <path d="M96 403l7 7-7 7-7-7z" fill="#189a43" />
        <path d="M93.500 413v-2.500l2.500-3.500 2.500 3.500v2.500" stroke="#fff" strokeWidth="1.400" fill="none" />
        <text x="5" y="397" fontSize="12" fontWeight="600" fill="#119a3c" stroke="#0b150c" strokeWidth="4" strokeLinejoin="round" paintOrder="stroke" fontFamily="Roboto, sans-serif">Sugarmill Woods, Hernando (27)</text>
        <text x="13" y="817" fontSize="27" fontWeight="700" fill="#fff" stroke="#c9c6a8" strokeWidth="2" paintOrder="stroke">esri</text>
      </svg>
      <MapSearch aria-label="Find on map" />
    </MapView>
    <ScaleRow>
      <label htmlFor="scale">Change Scale</label>
      <Combo id="scale" value="20000000" w={78} />
    </ScaleRow>
    <Tabs>
      <Tab $w={34} $active>M...</Tab>
      <Tab $w={83}>Incident Ti...</Tab>
      <Tab $w={60}>Commu...</Tab>
    </Tabs>
  </Panel>
);

const ResourceList = () => (
  <Panel>
    <PanelTitle>Resource List - Sugarmill Woods, Hernando (27)<Pin /></PanelTitle>
    <Toolbar $gap={16}>
      <ToolSet $gap={7}>
        <Tool aria-label="Check in"><CheckBadge /></Tool>
        <Tool aria-label="Assign list"><ListBadge /></Tool>
        <Tool aria-label="Map"><MapIcon s={21} c={red} /></Tool>
        <Tool aria-label="Label"><TagIcon /></Tool>
        <Tool aria-label="Incident crew"><PersonDisc badge="fire" /></Tool>
        <Tool aria-label="Radio"><RadioIcon /></Tool>
        <Tool $w={16} aria-label="Clear"><CrossIcon s={8} /></Tool>
      </ToolSet>
      <ToolSet $gap={4} $push>
        <Tool aria-label="Incident"><FireDiamond badge /></Tool>
        <Tool aria-label="Check"><CheckBadge /></Tool>
        <Tool aria-label="Time"><ClockBadge /></Tool>
        <Tool aria-label="Release"><PersonDisc badge="x" /></Tool>
        <Tool aria-label="Confirm"><PersonDisc badge="check" /></Tool>
        <Tool aria-label="Crew"><FigureDisc /></Tool>
        <Tool aria-label="Cancel"><MdCancel size={25} color={ink} /></Tool>
      </ToolSet>
      <ToolSet $gap={8}>
        <Tool aria-label="Refresh"><FaSyncAlt size={18} color="#333" /></Tool>
        <Tool aria-label="New"><MdInsertDriveFile size={24} color={ink} /></Tool>
      </ToolSet>
    </Toolbar>
    <GroupBar>
      <span />
      <Box $w={220}><Field placeholder="Search" aria-label="Search resources" /></Box>
    </GroupBar>
    <GridArea>
      <TableSide>
        <Table>
          <Cols widths={[16, 58, 118, 117, 117, 117]} />
          <thead>
            <Head $h={24}>
              <th /><th colSpan={2}>Name</th><th>Current Field Unit</th><th>Dispatch Status</th><th>Safety Check-In</th><th>Sch</th>
            </Head>
          </thead>
          <tbody>
            <BlankFilter spans={[2, 1, 1, 1, 1]} />
            {resources.map((name, i) => (
              <Row key={name} $bg="#cbcbcb">
                <Indicator />
                <td className="check"><CheckCell><Check aria-label={name} />{i === 0 && <Swatch />}</CheckCell></td>
                <td>{name}</td>
                <td>Withlacoochee</td>
                <Status $fill="#009a33" $ink="#10301a">Dispatched</Status>
                <Status $ink="#3fae49">GOOD</Status>
                <td>Uns</td>
              </Row>
            ))}
          </tbody>
        </Table>
      </TableSide>
      <ScrollRail w={17} h={24} />
    </GridArea>
    <HScroll thumb={115} end={17} />
    <Summary>Count=4</Summary>
    <BarFilter text="[Incident] = 'Sugarmill Woods, Hernando (27)' And [ID_INCIDENT] = '7e7eff88-5c82-4752-..." />
    <TileStrip>
      <Tile $bg="#9fceb0" aria-label="Done"><Svg s={50} v={50}><path d="M2 27l14 15L48 8" stroke="#eee" strokeWidth="6" /></Svg></Tile>
      <Tile $bg="#b0dde6" aria-label="En route"><Svg s={42} v={42}><path d="M6 42V14h28M23 2l12 12-12 12" stroke="#eee" strokeWidth="5" /></Svg></Tile>
      <Tile $bg="#cb9fe0" aria-label="Cancel"><MdCancel size={47} /></Tile>
      <Tile $bg="#ec9f9f" aria-label="On site"><MdLocationOn size={46} /></Tile>
      <Tile $bg="#b9b9b9" aria-label="Off site"><MdLocationOff size={46} /></Tile>
      <Tile $bg="#c4baab" aria-label="Return"><Svg s={42} v={42}><path d="M6 0v28h28M23 16l12 12-12 12" stroke="#eee" strokeWidth="5" /></Svg></Tile>
      <Tile $bg="#cdb29c" aria-label="Reset"><Svg s={42} v={42}><path d="M35 9A18 18 0 1039 27" stroke="#eee" strokeWidth="5" /><path d="M41 1v17H24z" fill="#eee" /></Svg></Tile>
      <Tile $bg="#acb8cf" aria-label="Off duty"><MdWorkOff size={46} /></Tile>
      <Tile $bg="#eecd9d" aria-label="Close"><CrossIcon s={46} w={1.1} c="#eee" /></Tile>
    </TileStrip>
  </Panel>
);

const Annotations = () => (
  <Callouts>
    <Outline $x={816} />
    <Outline $x={1708} />
    <Lines width="100%" height="100%" fill="none" stroke={mark} strokeWidth="6" strokeLinecap="round">
      <path d="M695 197H610" />
      <path d="M942 478C1200 564 1465 596 1688 443" />
      <path d="M506 945L519 979" />
      <path d="M656 941L632 982" />
      <g fill={mark} stroke="none">
        <path d="M593 197l19-9v18z" />
        <path d="M1700 432l-20 3 10 15z" />
        <path d="M525 996l-15-13 16-7z" />
        <path d="M622 997l2-20 16 9z" />
      </g>
    </Lines>
    <Badge $x={765} $y={32}>1</Badge>
    <Badge $x={77} $y={356}>2</Badge>
    <Badge $x={523} $y={352}>3</Badge>
    <Badge $x={488} $y={904}>4</Badge>
    <Badge $x={673} $y={904}>5</Badge>
    <Badge $x={885} $y={451}>6</Badge>
    <Note>Select All</Note>
  </Callouts>
);

export default function App() {
  return (
    <Page>
      <Global />
      <Frame>
        <InnerFrame>
          <TitleBar>
            <Svg s={16} v={16}>
              <path d="M7 1q5 1 2 4 3 0 1 4H5q0-5 3-5z" fill="#a3284a" />
              <circle cx="6" cy="12" r="3" fill="#f3a6a6" stroke="#d81f2c" strokeWidth="1.500" />
            </Svg>
            <WindowButtons>
              <button aria-label="Minimize"><Svg s={10} v={10}><path d="M1 7h8" stroke="#fff" strokeWidth="2" /></Svg></button>
              <button aria-label="Restore"><Svg s={10} v={10}><path d="M3 3V1h6v5H7" stroke="#fff" strokeWidth="1.500" /><path d="M1 4h6v5H1z" stroke="#fff" strokeWidth="1.500" /></Svg></button>
              <button aria-label="Close"><CrossIcon w={2} c="#fff" /></button>
            </WindowButtons>
          </TitleBar>
          <MenuRow>
            <MenuTab $active>Main</MenuTab>
            <MenuTab>Map</MenuTab>
            <MenuTab>Reports</MenuTab>
            <MenuTab>Dashboards</MenuTab>
            <MenuTab>Settings</MenuTab>
            <button aria-label="Collapse ribbon"><Chevron dir="up" c="#fff" w={2} s={8} /></button>
          </MenuRow>
          <RibbonBar />
          <Dock>
            <IncidentList />
            <SafetyCheckIn />
            <MapPanel />
            <ResourceList />
          </Dock>
        </InnerFrame>
      </Frame>
      <Annotations />
    </Page>
  );
}
